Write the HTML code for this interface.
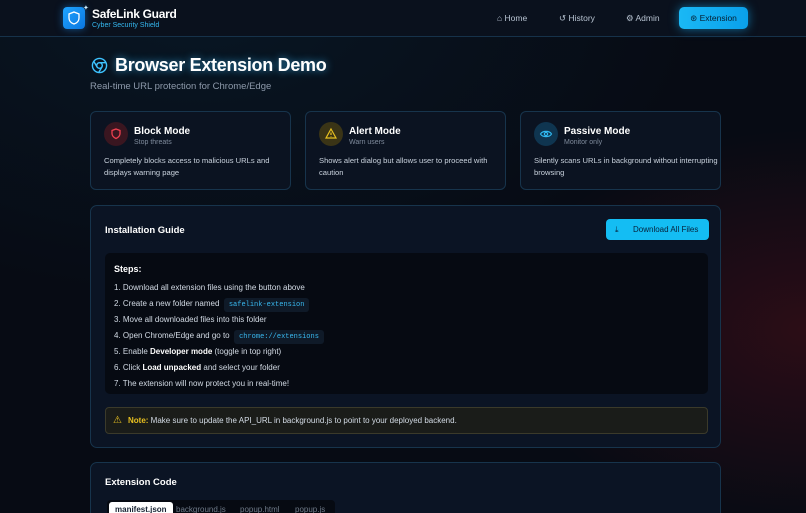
<!DOCTYPE html>
<html><head><meta charset="utf-8"><style>
*{margin:0;padding:0;box-sizing:border-box}
html{width:806px;height:513px;overflow:hidden;background:#070b14}
body{width:806px;height:513px;overflow:hidden;font-family:"Liberation Sans Narrow","Liberation Sans",sans-serif;color:#e6edf5;background:radial-gradient(ellipse 300px 200px at 806px 330px,rgba(80,15,25,.5),transparent),radial-gradient(ellipse 500px 300px at 200px 0,rgba(10,40,60,.4),transparent),#070b14;position:relative}
.hdr{position:absolute;left:0;top:0;width:806px;height:37px;background:#0a111d;border-bottom:1px solid #16324a}
.logo{position:absolute;left:63px;top:7px;width:22px;height:22px;border-radius:4px;background:linear-gradient(135deg,#1fa4ff,#0a76e0);box-shadow:0 0 8px rgba(30,150,255,.5)}
.brand{position:absolute;left:92px;top:7px;font-size:12px;font-weight:bold;color:#fff;letter-spacing:-.3px}
.brand small{display:block;font-size:7px;color:#35b8f0;font-weight:normal;margin-top:1px;letter-spacing:0}
.nav{position:absolute;top:13px;font-size:8.5px;color:#b8c4d2}
.ext{position:absolute;left:679px;top:7px;width:69px;height:22px;border-radius:5px;background:linear-gradient(90deg,#1ab8f5,#0aa0ea);box-shadow:0 0 10px rgba(20,170,240,.6);color:#062033;font-size:8.5px;text-align:center;line-height:22px}
h1{position:absolute;left:115px;top:55px;font-size:18px;color:#fff;text-shadow:0 0 8px rgba(60,190,255,.7);letter-spacing:-.3px}
.sub{position:absolute;left:90px;top:81px;font-size:9.5px;color:#8e9aab}
.card{position:absolute;top:111px;width:201px;height:79px;border:1px solid #17344c;border-radius:6px;background:#0b1321}
.ic{position:absolute;left:13px;top:10px;width:24px;height:24px;border-radius:50%}
.ct{position:absolute;left:43px;top:14px;font-size:10px;font-weight:bold;color:#fff}
.ct small{display:block;font-size:7px;color:#7f8b9c;font-weight:normal;margin-top:2px}
.cd{position:absolute;left:13px;top:43px;font-size:7.6px;line-height:12px;color:#c9d2dd;width:185px}
.panel{position:absolute;left:90px;width:631px;border:1px solid #17344c;border-radius:7px;background:#0b1424}
.pt{position:absolute;left:14px;font-size:9.5px;font-weight:bold;color:#fff}
.btn{position:absolute;left:515px;top:13px;width:103px;height:21px;border-radius:4px;background:#14bdf3;color:#06213a;font-size:8px;line-height:21px;padding-left:27px}
.steps{position:absolute;left:14px;top:47px;width:603px;height:141px;border-radius:5px;background:#060a12;padding:8px 9px;font-size:8px;color:#d3dbe5}
.steps b{color:#fff}
.steps div{height:16px;line-height:16px}
code{font-family:"Liberation Mono",monospace;font-size:7px;color:#39b9f0;background:#0f1a28;padding:3px 5px;border-radius:3px}
.note{position:absolute;left:14px;top:201px;width:603px;height:27px;border:1px solid #3b3a2a;border-radius:4px;background:#1a1c19;font-size:8px;line-height:25px;padding-left:22px;color:#d3dbe5}
.tabs{position:absolute;left:16px;top:37px;width:228px;height:20px;background:#060a12;border-radius:4px;font-size:8px;color:#6f7a89}
.tabs span{position:absolute;top:5px}
</style></head><body>
<div class="hdr">
<div class="logo"><svg width="22" height="22" viewBox="0 0 22 22"><path d="M11 5l5 2v4c0 3-2 5-5 6-3-1-5-3-5-6V7z" fill="none" stroke="#fff" stroke-width="1.3"/></svg></div>
<div style="position:absolute;left:83px;top:4px;color:#cfefff;font-size:7px">✦</div>
<div class="brand">SafeLink Guard<small>Cyber Security Shield</small></div>
<div class="nav" style="left:497px">⌂ Home</div>
<div class="nav" style="left:559px">↺ History</div>
<div class="nav" style="left:626px">⚙ Admin</div>
<div class="ext">⊛ Extension</div>
</div>
<svg style="position:absolute;left:91px;top:57px" width="17" height="17" viewBox="0 0 24 24" fill="none" stroke="#3ec3ff" stroke-width="2"><circle cx="12" cy="12" r="10"/><circle cx="12" cy="12" r="4"/><path d="M21.2 8H12M3.9 6.1l4.6 7.9M10.9 21.9l4.6-7.9"/></svg>
<h1>Browser Extension Demo</h1>
<div class="sub">Real-time URL protection for Chrome/Edge</div>

<div class="card" style="left:90px"><div class="ic" style="background:#3a1620"><svg width="24" height="24" viewBox="0 0 24 24"><path d="M12 7l4 1.5v3c0 2.5-1.8 4-4 5-2.2-1-4-2.5-4-5v-3z" fill="none" stroke="#f04050" stroke-width="1.3"/></svg></div><div class="ct">Block Mode<small>Stop threats</small></div><div class="cd">Completely blocks access to malicious URLs and displays warning page</div></div>
<div class="card" style="left:305px"><div class="ic" style="background:#3a3416"><svg width="24" height="24" viewBox="0 0 24 24"><path d="M12 7l5 9H7z M12 10.5v2.5M12 14.5v.5" fill="none" stroke="#e8c020" stroke-width="1.2"/></svg></div><div class="ct">Alert Mode<small>Warn users</small></div><div class="cd">Shows alert dialog but allows user to proceed with caution</div></div>
<div class="card" style="left:520px"><div class="ic" style="background:#0f3550"><svg width="24" height="24" viewBox="0 0 24 24"><path d="M6.5 12c2-3.5 9-3.5 11 0-2 3.5-9 3.5-11 0z" fill="none" stroke="#30b8f0" stroke-width="1.2"/><circle cx="12" cy="12" r="1.6" fill="none" stroke="#30b8f0" stroke-width="1.2"/></svg></div><div class="ct">Passive Mode<small>Monitor only</small></div><div class="cd">Silently scans URLs in background without interrupting browsing</div></div>

<div class="panel" style="top:205px;height:243px">
<div class="pt" style="top:19px">Installation Guide</div>
<div class="btn"><span style="position:absolute;left:9px;top:0">⤓</span>Download All Files</div>
<div class="steps">
<div style="font-size:9px;font-weight:bold;color:#fff;margin-bottom:3px">Steps:</div>
<div>1. Download all extension files using the button above</div>
<div>2. Create a new folder named &nbsp;<code>safelink-extension</code></div>
<div>3. Move all downloaded files into this folder</div>
<div>4. Open Chrome/Edge and go to &nbsp;<code>chrome://extensions</code></div>
<div>5. Enable <b>Developer mode</b> (toggle in top right)</div>
<div>6. Click <b>Load unpacked</b> and select your folder</div>
<div>7. The extension will now protect you in real-time!</div>
</div>
<div class="note"><span style="position:absolute;left:7px;color:#e8c020;font-size:10px">⚠</span><b style="color:#e8c020">Note:</b> Make sure to update the API_URL in background.js to point to your deployed backend.</div>
</div>

<div class="panel" style="top:462px;height:51px;border-bottom:none;border-radius:7px 7px 0 0">
<div class="pt" style="top:14px">Extension Code</div>
<div class="tabs"><span style="left:2px;top:2px;background:#fff;color:#152030;border-radius:3px;padding:3px 6px;font-weight:bold">manifest.json</span><span style="left:69px">background.js</span><span style="left:133px">popup.html</span><span style="left:188px">popup.js</span></div>
</div>
</body></html>
